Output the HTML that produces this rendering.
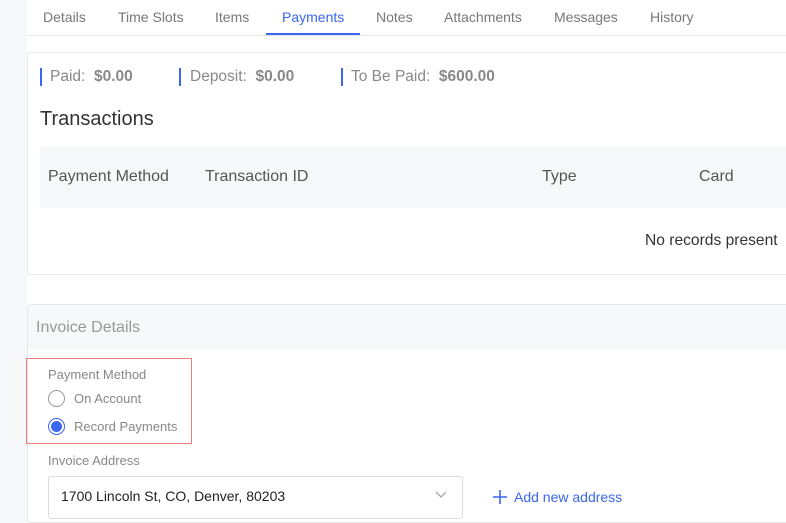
<!DOCTYPE html>
<html><head><style>
html,body{margin:0;width:786px;height:523px;overflow:hidden}
body{background:#fff;font-family:"Liberation Sans",sans-serif;position:relative}
.a{position:absolute;white-space:nowrap}
.left{position:absolute;left:0;top:0;width:27px;height:523px;background:#f7f8fa}
.tab{position:absolute;top:9px;font-size:14px;color:#777}
</style></head><body>
<div class="left"></div>
<div class="a" style="left:27px;top:35px;width:759px;height:1px;background:#e8e8e8"></div>
<div class="tab" style="left:43px">Details</div>
<div class="tab" style="left:118px">Time Slots</div>
<div class="tab" style="left:215px">Items</div>
<div class="tab" style="left:282px;color:#3a66f0">Payments</div>
<div class="a" style="left:266px;top:33px;width:94px;height:2px;background:#3a66f0"></div>
<div class="tab" style="left:376px">Notes</div>
<div class="tab" style="left:444px">Attachments</div>
<div class="tab" style="left:554px">Messages</div>
<div class="tab" style="left:650px">History</div>

<div class="a" style="left:27px;top:52px;width:770px;height:221px;border:1px solid #e6e6e6;border-radius:3px"></div>
<div class="a" style="left:40px;top:68px;width:2px;height:18px;background:#3a66f0"></div>
<div class="a" style="left:50px;top:68px;font-size:15.5px;color:#888">Paid:&nbsp; <b style="color:#888">$0.00</b></div>
<div class="a" style="left:179px;top:68px;width:2px;height:18px;background:#3a66f0"></div>
<div class="a" style="left:190px;top:68px;font-size:15.5px;color:#888">Deposit:&nbsp; <b>$0.00</b></div>
<div class="a" style="left:341px;top:68px;width:2px;height:18px;background:#3a66f0"></div>
<div class="a" style="left:351px;top:68px;font-size:15.5px;color:#888">To Be Paid:&nbsp; <b>$600.00</b></div>
<div class="a" style="left:40px;top:108px;font-size:20px;color:#333">Transactions</div>
<div class="a" style="left:40px;top:146px;width:746px;height:62px;background:#f7f8fa"></div>
<div class="a" style="left:48px;top:168px;font-size:16px;color:#555">Payment Method</div>
<div class="a" style="left:205px;top:168px;font-size:16px;color:#555">Transaction ID</div>
<div class="a" style="left:542px;top:168px;font-size:16px;color:#555">Type</div>
<div class="a" style="left:699px;top:168px;font-size:16px;color:#555">Card</div>
<div class="a" style="left:645px;top:232px;font-size:15.6px;color:#333">No records present</div>

<div class="a" style="left:27px;top:304px;width:770px;height:230px;border:1px solid #e6e6e6;border-radius:3px;box-sizing:border-box;height:219px"></div>
<div class="a" style="left:28px;top:305px;width:758px;height:45px;background:#f7f8fa"></div>
<div class="a" style="left:36px;top:319px;font-size:16px;color:#999">Invoice Details</div>
<div class="a" style="left:26px;top:358px;width:164px;height:84px;border:1px solid #e88080"></div>
<div class="a" style="left:48px;top:367px;font-size:13px;color:#888">Payment Method</div>
<div class="a" style="left:48px;top:390px;width:15px;height:15px;border:1px solid #999;border-radius:50%"></div>
<div class="a" style="left:74px;top:391px;font-size:13px;color:#888">On Account</div>
<div class="a" style="left:48px;top:418px;width:15px;height:15px;border:1px solid #3a66f0;border-radius:50%"></div>
<div class="a" style="left:51px;top:421px;width:11px;height:11px;background:#3a66f0;border-radius:50%"></div>
<div class="a" style="left:74px;top:419px;font-size:13px;color:#888">Record Payments</div>
<div class="a" style="left:48px;top:453px;font-size:13px;color:#888">Invoice Address</div>
<div class="a" style="left:48px;top:476px;width:413px;height:41px;border:1px solid #ddd;border-radius:3px"></div>
<div class="a" style="left:61px;top:488px;font-size:14px;color:#222">1700 Lincoln St, CO, Denver, 80203</div>
<svg class="a" style="left:435px;top:491px" width="12" height="8" viewBox="0 0 12 8"><path d="M1 1l5 5 5-5" fill="none" stroke="#aaa" stroke-width="1.3"/></svg>
<svg class="a" style="left:492px;top:489px" width="16" height="16" viewBox="0 0 16 16"><path d="M8 1v14M1 8h14" stroke="#3a66f0" stroke-width="1.6"/></svg>
<div class="a" style="left:514px;top:489px;font-size:14px;color:#3a66f0">Add new address</div>
</body></html>
